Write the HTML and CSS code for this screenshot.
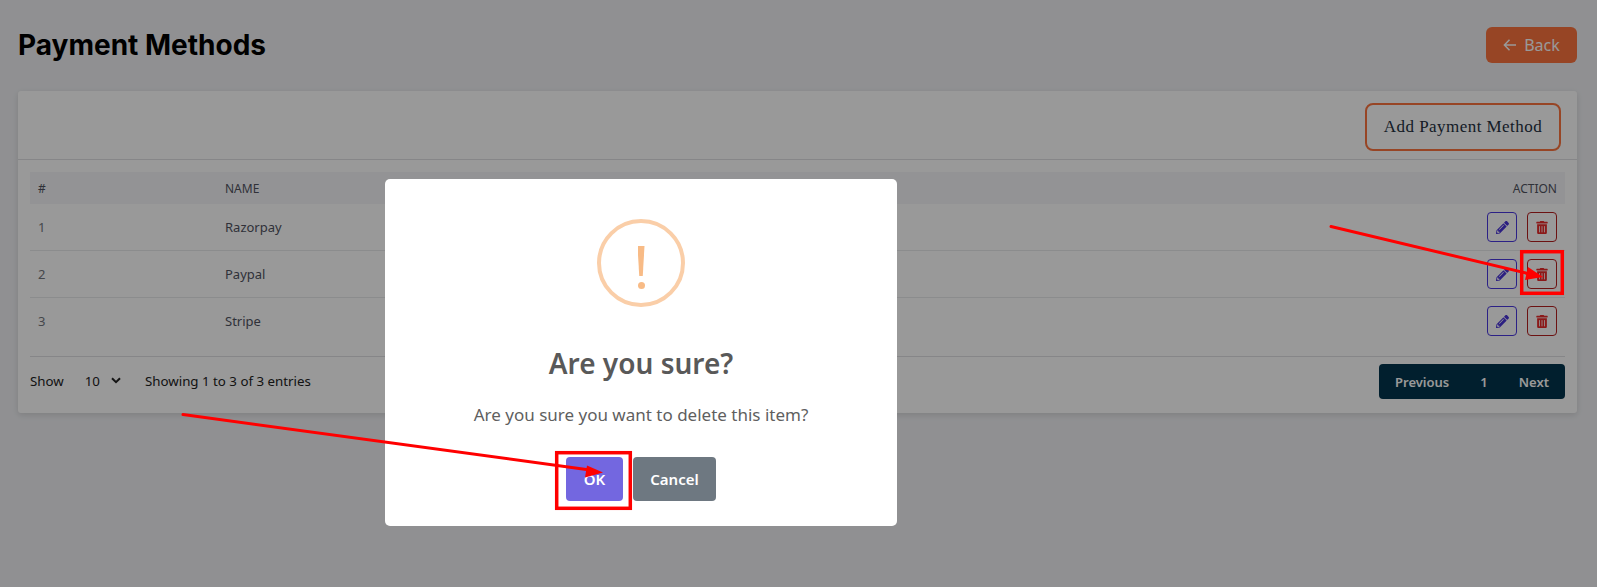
FILE: index.html
```html
<!DOCTYPE html>
<html lang="en">
<head>
  <meta charset="UTF-8" />
  <title>Payment Methods</title>
  <link rel="stylesheet" href="styles.css">
</head>
<body>
  <div class="page">
    <div class="page-head">
      <h1>Payment Methods</h1>
      <a class="back-btn" href="#">
        <svg width="14" height="14" viewBox="0 0 14 14"><path d="M13 7H1.5M6.5 1.8L1.4 7l5.1 5.2" fill="none" stroke="currentColor" stroke-width="1.5"/></svg>
        Back
      </a>
    </div>

    <div class="card">
      <div class="card-head">
        <button class="add-btn">Add Payment Method</button>
      </div>
      <div class="card-body">
        <table class="data-table">
          <thead>
            <tr>
              <th class="col-id">#</th>
              <th>NAME</th>
              <th class="col-action">ACTION</th>
            </tr>
          </thead>
          <tbody>
            <tr>
              <td class="col-id">1</td>
              <td>Razorpay</td>
              <td class="col-action">
                <div class="actions">
                  <button class="icon-btn edit"><svg width="13" height="13" viewBox="0 0 512 512"><path fill="currentColor" d="M497.9 142.1l-46.1 46.1c-4.7 4.7-12.3 4.7-17 0l-111-111c-4.7-4.7-4.7-12.3 0-17l46.1-46.1c18.7-18.7 49.1-18.7 67.9 0l60.1 60.1c18.8 18.7 18.8 49.1 0 67.9zM284.2 99.8L21.6 362.4.4 483.9c-2.9 16.4 11.4 30.6 27.8 27.8l121.5-21.3 262.6-262.6c4.7-4.7 4.7-12.3 0-17l-111-111c-4.8-4.7-12.4-4.7-17.1 0zM124.1 339.9c-5.5-5.5-5.5-14.3 0-19.8l154-154c5.5-5.5 14.3-5.5 19.8 0s5.5 14.3 0 19.8l-154 154c-5.5 5.5-14.3 5.5-19.8 0zM88 424h48v36.3l-64.5 11.3-31.1-31.1L51.7 376H88v48z"/></svg></button>
                  <button class="icon-btn del"><svg width="12" height="13" viewBox="0 0 448 512"><path fill="currentColor" d="M32 464a48 48 0 0 0 48 48h288a48 48 0 0 0 48-48V128H32zm272-256a16 16 0 0 1 32 0v224a16 16 0 0 1-32 0zm-96 0a16 16 0 0 1 32 0v224a16 16 0 0 1-32 0zm-96 0a16 16 0 0 1 32 0v224a16 16 0 0 1-32 0zM432 32H312l-9.4-18.7A24 24 0 0 0 281.1 0H166.8a23.72 23.72 0 0 0-21.4 13.3L136 32H16A16 16 0 0 0 0 48v32a16 16 0 0 0 16 16h416a16 16 0 0 0 16-16V48a16 16 0 0 0-16-16z"/></svg></button>
                </div>
              </td>
            </tr>
            <tr>
              <td class="col-id">2</td>
              <td>Paypal</td>
              <td class="col-action">
                <div class="actions">
                  <button class="icon-btn edit"><svg width="13" height="13" viewBox="0 0 512 512"><path fill="currentColor" d="M497.9 142.1l-46.1 46.1c-4.7 4.7-12.3 4.7-17 0l-111-111c-4.7-4.7-4.7-12.3 0-17l46.1-46.1c18.7-18.7 49.1-18.7 67.9 0l60.1 60.1c18.8 18.7 18.8 49.1 0 67.9zM284.2 99.8L21.6 362.4.4 483.9c-2.9 16.4 11.4 30.6 27.8 27.8l121.5-21.3 262.6-262.6c4.7-4.7 4.7-12.3 0-17l-111-111c-4.8-4.7-12.4-4.7-17.1 0zM124.1 339.9c-5.5-5.5-5.5-14.3 0-19.8l154-154c5.5-5.5 14.3-5.5 19.8 0s5.5 14.3 0 19.8l-154 154c-5.5 5.5-14.3 5.5-19.8 0zM88 424h48v36.3l-64.5 11.3-31.1-31.1L51.7 376H88v48z"/></svg></button>
                  <button class="icon-btn del"><svg width="12" height="13" viewBox="0 0 448 512"><path fill="currentColor" d="M32 464a48 48 0 0 0 48 48h288a48 48 0 0 0 48-48V128H32zm272-256a16 16 0 0 1 32 0v224a16 16 0 0 1-32 0zm-96 0a16 16 0 0 1 32 0v224a16 16 0 0 1-32 0zm-96 0a16 16 0 0 1 32 0v224a16 16 0 0 1-32 0zM432 32H312l-9.4-18.7A24 24 0 0 0 281.1 0H166.8a23.72 23.72 0 0 0-21.4 13.3L136 32H16A16 16 0 0 0 0 48v32a16 16 0 0 0 16 16h416a16 16 0 0 0 16-16V48a16 16 0 0 0-16-16z"/></svg></button>
                </div>
              </td>
            </tr>
            <tr>
              <td class="col-id">3</td>
              <td>Stripe</td>
              <td class="col-action">
                <div class="actions">
                  <button class="icon-btn edit"><svg width="13" height="13" viewBox="0 0 512 512"><path fill="currentColor" d="M497.9 142.1l-46.1 46.1c-4.7 4.7-12.3 4.7-17 0l-111-111c-4.7-4.7-4.7-12.3 0-17l46.1-46.1c18.7-18.7 49.1-18.7 67.9 0l60.1 60.1c18.8 18.7 18.8 49.1 0 67.9zM284.2 99.8L21.6 362.4.4 483.9c-2.9 16.4 11.4 30.6 27.8 27.8l121.5-21.3 262.6-262.6c4.7-4.7 4.7-12.3 0-17l-111-111c-4.8-4.7-12.4-4.7-17.1 0zM124.1 339.9c-5.5-5.5-5.5-14.3 0-19.8l154-154c5.5-5.5 14.3-5.5 19.8 0s5.5 14.3 0 19.8l-154 154c-5.5 5.5-14.3 5.5-19.8 0zM88 424h48v36.3l-64.5 11.3-31.1-31.1L51.7 376H88v48z"/></svg></button>
                  <button class="icon-btn del"><svg width="12" height="13" viewBox="0 0 448 512"><path fill="currentColor" d="M32 464a48 48 0 0 0 48 48h288a48 48 0 0 0 48-48V128H32zm272-256a16 16 0 0 1 32 0v224a16 16 0 0 1-32 0zm-96 0a16 16 0 0 1 32 0v224a16 16 0 0 1-32 0zm-96 0a16 16 0 0 1 32 0v224a16 16 0 0 1-32 0zM432 32H312l-9.4-18.7A24 24 0 0 0 281.1 0H166.8a23.72 23.72 0 0 0-21.4 13.3L136 32H16A16 16 0 0 0 0 48v32a16 16 0 0 0 16 16h416a16 16 0 0 0 16-16V48a16 16 0 0 0-16-16z"/></svg></button>
                </div>
              </td>
            </tr>
          </tbody>
        </table>

        <div class="table-foot">
          <div class="foot-left">
            <span>Show</span>
            <span class="page-size">10
              <svg width="10" height="7" viewBox="0 0 10 7"><path d="M1 1.2l4 4 4-4" fill="none" stroke="currentColor" stroke-width="2"/></svg>
            </span>
            <span>Showing 1 to 3 of 3 entries</span>
          </div>
          <div class="pager">
            <a href="#">Previous</a>
            <a href="#">1</a>
            <a href="#">Next</a>
          </div>
        </div>
      </div>
    </div>
  </div>

  <div class="overlay">
    <div class="modal">
      <div class="warn-icon">
        <span class="warn-line"></span>
        <span class="warn-dot"></span>
      </div>
      <h2>Are you sure?</h2>
      <p>Are you sure you want to delete this item?</p>
      <div class="modal-actions">
        <button class="btn-ok">OK</button>
        <button class="btn-cancel">Cancel</button>
      </div>
    </div>
  </div>

  <!-- red annotations on top of the screenshot -->
  <svg class="annotations" width="1597" height="587" viewBox="0 0 1597 587">
    <g fill="none" stroke="#ff0000" stroke-width="3.5">
      <rect x="1521.7" y="251.7" width="40.6" height="41.6"/>
      <rect x="556.7" y="452.7" width="73.6" height="55.6"/>
    </g>
    <g fill="none" stroke="#ff0000" stroke-width="3">
      <path d="M1331 226.5L1532 274.5" stroke-linecap="round"/>
      <path d="M183 414.5L590 470" stroke-linecap="round"/>
    </g>
    <path d="M1543 277l-15-10-3 13z" fill="#ff0000"/>
    <path d="M603 472.5l-16-7-2 12z" fill="#ff0000"/>
  </svg>
</body>
</html>
```

FILE: styles.css
```css
* {
  margin: 0;
  padding: 0;
  box-sizing: border-box;
}

body {
  background-color: #f0f1f4;
  height: 587px;
  overflow: hidden;
  font-family: "Noto Sans", sans-serif;
  color: #4b4f56;
}

.page {
  padding: 27px 20px 0 18px;
}

.page-head {
  display: flex;
  justify-content: space-between;
  align-items: center;
  margin-bottom: 28px;
}

.page-head h1 {
  font-family: Inter, sans-serif;
  font-size: 28px;
  font-weight: 700;
  color: #000;
}

.back-btn {
  display: flex;
  justify-content: center;
  align-items: center;
  gap: 7px;
  width: 91px;
  height: 36px;
  font-size: 16px;
  color: #fff;
  background-color: #fc743f;
  border-radius: 6px;
  text-decoration: none;
}

.card {
  background-color: #fff;
  height: 322px;
  border-radius: 3px;
  box-shadow: 0 2px 6px rgba(0, 0, 0, 0.12);
}

.card-head {
  display: flex;
  justify-content: flex-end;
  height: 69px;
  padding: 12px 16px 0 0;
  border-bottom: 1px solid #dfe0e3;
}

.add-btn {
  width: 196px;
  height: 48px;
  font-family: "Liberation Serif", serif;
  font-size: 17px;
  letter-spacing: 0.45px;
  color: #24303f;
  background: none;
  border: 2px solid #fc743f;
  border-radius: 8px;
}

.card-body {
  padding: 12px 12px 0;
}

.data-table {
  width: 100%;
  border-collapse: separate;
  border-spacing: 0;
  font-size: 13px;
}

.data-table th {
  height: 32px;
  padding: 0 8px;
  text-align: left;
  font-size: 12px;
  font-weight: 400;
  color: #50535f;
  background-color: #f5f6f8;
}

.data-table td {
  height: 47px;
  padding: 0 8px;
  color: #50535f;
  border-bottom: 1px solid #e8e9ec;
}

.data-table .col-id {
  width: 187px;
}

.data-table td.col-id {
  color: #74777d;
}

.data-table .col-action {
  text-align: right;
}

.data-table tr:last-child td {
  border-bottom-color: transparent;
}

.actions {
  display: flex;
  justify-content: flex-end;
  gap: 10px;
}

.icon-btn {
  display: flex;
  justify-content: center;
  align-items: center;
  width: 30px;
  height: 30px;
  background: none;
  border-radius: 4px;
}

.icon-btn.edit {
  color: #4a35d8;
  border: 1px solid #4a38e0;
}

.icon-btn.del {
  color: #e82a2a;
  border: 1px solid #b51f1f;
}

.table-foot {
  display: flex;
  justify-content: space-between;
  align-items: center;
  margin-top: 11px;
  padding-top: 7px;
  border-top: 1px solid #dfe0e3;
  font-size: 13.3px;
  color: #222;
}

.foot-left {
  display: flex;
  align-items: center;
  margin-bottom: 2px;
}

.page-size {
  display: flex;
  align-items: center;
  gap: 11px;
  margin: 0 24px 0 21px;
}

.pager {
  display: flex;
  align-items: center;
  justify-content: space-between;
  width: 186px;
  height: 35px;
  padding: 0 16px;
  background-color: #03344d;
  border-radius: 4px;
}

.pager a {
  font-size: 13px;
  font-weight: 600;
  color: #fff;
  text-decoration: none;
}

.overlay {
  position: fixed;
  top: 0;
  left: 0;
  width: 100%;
  height: 100%;
  padding: 179px 0 0 385px;
  background-color: rgba(0, 0, 0, 0.4);
}

.modal {
  display: flex;
  flex-direction: column;
  align-items: center;
  width: 512px;
  height: 347px;
  padding-top: 40px;
  background-color: #fff;
  border-radius: 5px;
}

.warn-icon {
  display: flex;
  flex-direction: column;
  align-items: center;
  width: 88px;
  height: 88px;
  padding-top: 23px;
  border: 4px solid #facea8;
  border-radius: 50%;
}

.warn-line {
  width: 7px;
  height: 30px;
  background-color: #f8bb86;
  clip-path: polygon(0 0, 100% 0, 75% 100%, 25% 100%);
}

.warn-dot {
  width: 7px;
  height: 7px;
  margin-top: 6px;
  background-color: #f8bb86;
  border-radius: 50%;
}

.modal h2 {
  margin-top: 36px;
  font-size: 28px;
  line-height: 40px;
  font-weight: 600;
  color: #595959;
}

.modal p {
  margin-top: 19px;
  font-size: 17px;
  line-height: 25px;
  color: #5f5f5f;
}

.modal-actions {
  display: flex;
  gap: 10px;
  margin-top: 30px;
}

.modal-actions button {
  height: 44px;
  font-family: "Noto Sans", sans-serif;
  font-size: 15px;
  font-weight: 600;
  color: #fff;
  border: none;
  border-radius: 4px;
}

.btn-ok {
  width: 57px;
  background-color: #7367e0;
}

.btn-cancel {
  width: 83px;
  background-color: #6e7881;
}

.annotations {
  position: fixed;
  top: 0;
  left: 0;
}
```
